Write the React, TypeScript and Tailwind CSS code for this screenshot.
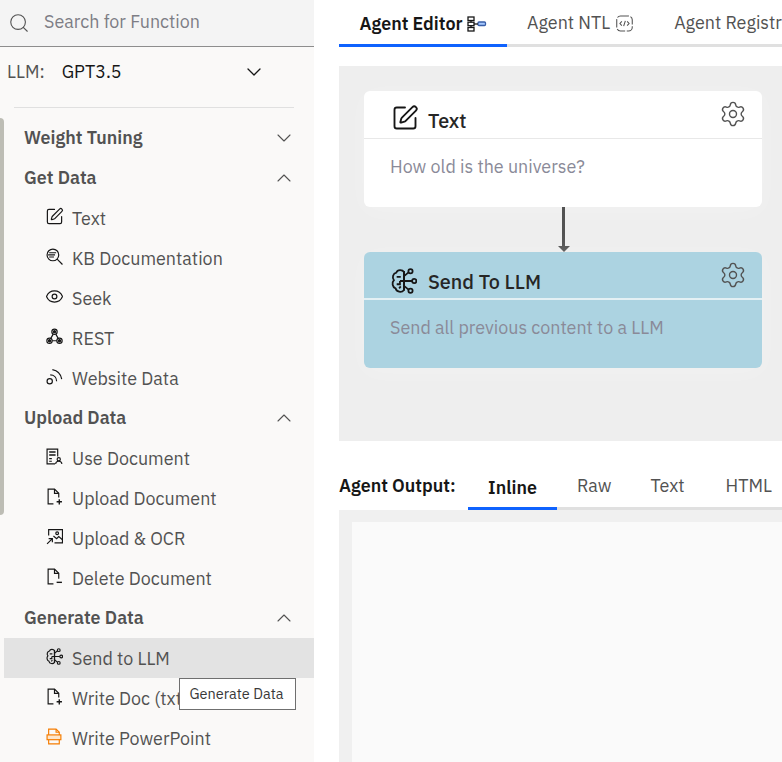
import { ChevronDown, ChevronUp, Search, Settings, SquarePen, Eye } from "lucide-react";
import type { ReactNode } from "react";

function Svg({ children, className = "" }: { children: ReactNode; className?: string }) {
  return (
    <svg viewBox="0 0 16 16" fill="none" stroke="currentColor" strokeWidth="1.1" className={className}>
      {children}
    </svg>
  );
}

const KbIcon = () => (
  <Svg className="h-[17px] w-[17px]">
    <circle cx="6.5" cy="6.5" r="5.5" />
    <path d="M10.5 10.5 15.500 15.500" />
    <path d="M3 4.500h6.500M2 6.500h6.500M3 8.500h4.500" strokeWidth="1.100" />
  </Svg>
);

const RestIcon = () => (
  <Svg className="h-[17px] w-[17px]">
    <circle cx="8" cy="3.5" r="2.500" />
    <circle cx="3.300" cy="12" r="2.500" />
    <circle cx="12.700" cy="12" r="2.500" />
    <path d="M6.800 5.800 4.500 9.800M9.200 5.800l2.300 4M5.800 12h4.400" />
    <circle cx="3.300" cy="12" r="1" fill="currentColor" />
    <circle cx="12.700" cy="12" r="1" fill="currentColor" />
    <circle cx="8" cy="3.500" r="1" fill="currentColor" />
  </Svg>
);

const WebIcon = () => (
  <Svg className="h-[17px] w-[17px]">
    <circle cx="3.500" cy="12.500" r="2.500" />
    <path d="M4 6.500c3.500 0 6 2.500 6 6M6 1.500c4.500.8 8 4.300 8.800 9" />
  </Svg>
);

const UseDocIcon = () => (
  <Svg className="h-[17px] w-[17px]">
    <path d="M8.500 15H1V1h10v7" />
    <path d="M3 3.800h6M3 6.500h6" strokeWidth="1.400" />
    <path d="M3 10h2.500M3 12.500h2.500" />
    <circle cx="12" cy="10.500" r="1.500" />
    <path d="M9 15c.3-2 1.500-2.500 3-2.500s2.700.5 3 2.500" />
  </Svg>
);

const DocAddIcon = () => (
  <Svg className="h-[17px] w-[17px]">
    <path d="M7 15H2V1h6l4 4v4" />
    <path d="M8 1v4h4" />
    <path d="M12.500 10.500v5M10 13h5" strokeWidth="1.300" />
  </Svg>
);

const DocMinusIcon = () => (
  <Svg className="h-[17px] w-[17px]">
    <path d="M7 15H2V1h6l4 4v5" />
    <path d="M8 1v4h4" />
    <path d="M10 13.500h5" strokeWidth="1.300" />
  </Svg>
);

const OcrIcon = () => (
  <Svg className="h-[17px] w-[17px]">
    <path d="M2.500 7V1.500h13V14H8" />
    <circle cx="10.500" cy="5" r="1.300" />
    <path d="M7 7.500l3 2.500 2-2 3.500 3" />
    <path d="M1 15l5-5M2.500 10H6v3.500" />
  </Svg>
);

const BrainIcon = ({ className = "h-[17px] w-[17px]" }: { className?: string }) => (
  <Svg className={className}>
    <path d="M8 2.500C7 .8 4 .8 3.300 2.800 1.200 3.300.5 5.800 1.800 7.500.4 9 .8 11.800 2.800 12.500c.5 2.300 3.700 3 5.200 1z" />
    <path d="M8 1.800v12M3.500 5.500H6M3.500 10H5.500V8M5.500 8H8M5 12.500l1-1.200" />
    <path d="M8 8h5M8 5l3-2.500M8 11l3 2.500" />
    <circle cx="12" cy="2" r="1.300" />
    <circle cx="14.300" cy="8" r="1.300" />
    <circle cx="12" cy="14" r="1.300" />
  </Svg>
);

const PptIcon = () => (
  <Svg className="h-[17px] w-[17px] text-[#f57c00]">
    <path d="M2.500 6.500V1h7l3 3v2.500" />
    <path d="M9.500 1v3h3" />
    <rect x="1" y="6.500" width="13" height="4.500" fill="#fde6cc" />
    <path d="M2.500 11v4h10v-4" />
  </Svg>
);

const FlowIcon = () => (
  <svg viewBox="0 0 20 16" className="h-4 w-5" fill="none" stroke="currentColor" strokeWidth="1.300">
    <rect x="1" y="1" width="6" height="3.500" />
    <rect x="1" y="6.200" width="6" height="3.500" />
    <rect x="1" y="11.500" width="6" height="3.500" />
    <path d="M4 4.500v1.700M4 9.700v1.800" />
    <rect x="11" y="6" width="7.500" height="3.500" rx="1" fill="#a6c8ff" stroke="#3a5fa8" />
    <path d="M7 8h4" />
  </svg>
);

const NtlIcon = () => (
  <svg viewBox="0 0 16 16" className="h-[17px] w-[17px]" fill="none" stroke="currentColor" strokeWidth="1">
    <rect x="0.700" y="1" width="14.600" height="14" rx="3.500" strokeDasharray="8 1.500" />
    <path d="M5.500 6 3.700 8l1.800 2M10.500 6l1.800 2-1.800 2M8.800 5.500 7.200 10.500" />
  </svg>
);

type Item = { label: string; icon: ReactNode; active?: boolean };
type Group = { title: string; open: boolean; items: Item[] };

const groups: Group[] = [
  { title: "Weight Tuning", open: false, items: [] },
  {
    title: "Get Data",
    open: true,
    items: [
      { label: "Text", icon: <SquarePen className="-ml-px h-[19px] w-[19px]" strokeWidth={1.5} /> },
      { label: "KB Documentation", icon: <KbIcon /> },
      { label: "Seek", icon: <Eye className="-ml-px h-[19px] w-[19px]" strokeWidth={1.5} /> },
      { label: "REST", icon: <RestIcon /> },
      { label: "Website Data", icon: <WebIcon /> },
    ],
  },
  {
    title: "Upload Data",
    open: true,
    items: [
      { label: "Use Document", icon: <UseDocIcon /> },
      { label: "Upload Document", icon: <DocAddIcon /> },
      { label: "Upload & OCR", icon: <OcrIcon /> },
      { label: "Delete Document", icon: <DocMinusIcon /> },
    ],
  },
  {
    title: "Generate Data",
    open: true,
    items: [
      { label: "Send to LLM", icon: <BrainIcon />, active: true },
      { label: "Write Doc (txt)", icon: <DocAddIcon /> },
      { label: "Write PowerPoint", icon: <PptIcon /> },
    ],
  },
];

function Sidebar() {
  return (
    <aside className="relative h-[762px] w-[314px] shrink-0 overflow-hidden bg-[#faf9f8]">
      <div className="flex h-[47px] items-center border-b border-[#8d8d8d] bg-[#f4f4f4] pl-2">
        <Search className="h-[22px] w-[22px] text-[#525252]" strokeWidth={1.2} />
        <span className="mb-[2px] ml-[14px] text-[#7d7d85]">Search for Function</span>
      </div>
      <div className="flex h-[50px] items-center pl-[7px] pr-[48px]">
        <span className="text-[#525252]">LLM:</span>
        <span className="ml-[17px] flex-1 text-[#161616]">GPT3.5</span>
        <ChevronDown className="h-6 w-6 text-[#161616]" strokeWidth={1.3} />
      </div>
      <div className="ml-[14px] mt-[10px] h-px w-[280px] bg-[#e0e0e0]" />
      <div className="absolute left-0 top-[118px] h-[397px] w-1 rounded-r bg-[#bdbdb5]" />
      <div className="mt-[10px] pl-1">
        {groups.map((group) => (
          <div key={group.title}>
            <div className="flex h-10 items-center justify-between pl-5 pr-[18px]">
              <span className="font-semibold text-[#525252]">{group.title}</span>
              {group.open ? (
                <ChevronUp className="mb-px h-6 w-6 text-[#525252]" strokeWidth={1.1} />
              ) : (
                <ChevronDown className="h-6 w-6 text-[#525252]" strokeWidth={1.1} />
              )}
            </div>
            {group.items.map((item) => (
              <div
                key={item.label}
                className={`flex h-10 items-center pl-[42px] text-[#525252] ${item.active ? "bg-[#e3e3e3]" : ""}`}
              >
                <span className="mb-[3px] flex w-[26px] text-[#161616]">{item.icon}</span>
                <span className="pt-[2px]">{item.label}</span>
              </div>
            ))}
          </div>
        ))}
      </div>
      <div className="absolute left-[179px] top-[678px] flex h-8 w-[117px] items-center justify-center border border-[#6f6f6f] bg-white pr-[2px] text-[14.5px] text-[#393939]">
        Generate Data
      </div>
    </aside>
  );
}

function NodeCard({
  title,
  text,
  icon,
  blue,
}: {
  title: string;
  text: string;
  icon: ReactNode;
  blue?: boolean;
}) {
  return (
    <div className={`h-[116px] w-[398px] rounded-md shadow-[0_4px_24px_rgba(255,255,255,0.25)] ${blue ? "bg-[#acd3e1]" : "bg-white"}`}>
      <div className={`relative flex h-[48px] items-start ${blue ? "border-b-2 border-[#e4f0f4] pl-[27px] pt-[16px]" : "border-b border-[#e8e8e8] pl-[27px] pt-[13px]"}`}>
        <span className="flex w-[37px] text-[#161616]">{icon}</span>
        <span className={`text-[19.8px] font-medium text-[#262626] ${blue ? "pt-[2px]" : "pt-[5px]"}`}>{title}</span>
        <Settings className="absolute right-[15px] top-[9px] h-7 w-7 text-[#525252]" strokeWidth={1.2} />
      </div>
      <p className="pl-[26px] pt-4 text-[#8a8a98]">{text}</p>
    </div>
  );
}

function Main() {
  return (
    <main className="h-[762px] min-w-0 flex-1 overflow-hidden bg-white pl-[25px]">
      <div className="flex h-[47px] w-[600px] border-b-[3px] border-[#e0e0e0]">
        <div className="-mb-[3px] flex w-[168px] items-center justify-center gap-1 border-b-[3px] border-[#0f62fe] pt-1 font-semibold text-[#161616]">
          Agent Editor <FlowIcon />
        </div>
        <div className="flex items-center gap-[6px] pl-5 pt-[2px] text-[#525252]">
          Agent NTL <NtlIcon />
        </div>
        <div className="flex items-center whitespace-nowrap pl-[41px] pt-[2px] text-[#525252]">Agent Registry</div>
      </div>
      <div className="mt-[19px] flex h-[375px] flex-col bg-[#eeeeee] pl-[25px] pt-[25px]">
        <NodeCard
          title="Text"
          text="How old is the universe?"
          icon={<SquarePen className="h-[28px] w-[28px]" strokeWidth={1.6} />}
        />
        <div className="ml-[196px] flex h-[45px] w-[7px] flex-col items-center">
          <div className="w-[3px] flex-1 bg-[#525252]" />
          <div className="h-0 w-0 border-x-[6px] border-t-[6px] border-x-transparent border-t-[#525252]" />
        </div>
        <NodeCard title="Send To LLM" text="Send all previous content to a LLM" icon={<BrainIcon className="h-[26px] w-[26px]" />} blue />
      </div>
      <div className="mt-[22px] flex h-[47px] w-[600px] items-center">
        <span className="w-[129px] pb-[2px] font-semibold text-[#161616]">Agent Output:</span>
        <div className="flex h-full flex-1 border-b-[3px] border-[#e0e0e0]">
          <div className="-mb-[3px] flex w-[89px] items-center justify-center border-b-[3px] border-[#0f62fe] pt-[6px] font-semibold text-[#161616]">
            Inline
          </div>
          <div className="flex items-center pl-[20px] pt-[2px] text-[#525252]">Raw</div>
          <div className="flex items-center pl-[39px] pt-[2px] text-[#525252]">Text</div>
          <div className="flex items-center pl-[41px] pt-[2px] text-[#525252]">HTML</div>
        </div>
      </div>
      <div className="h-[252px] bg-[#f0f0f0] pl-[13px] pt-3">
        <div className="h-full bg-[#fafafa]" />
      </div>
    </main>
  );
}

export default function App() {
  return (
    <div className="flex h-[762px] w-[782px] overflow-hidden font-['IBM_Plex_Sans','Noto_Sans',sans-serif] text-[17.9px] leading-6">
      <Sidebar />
      <Main />
    </div>
  );
}
